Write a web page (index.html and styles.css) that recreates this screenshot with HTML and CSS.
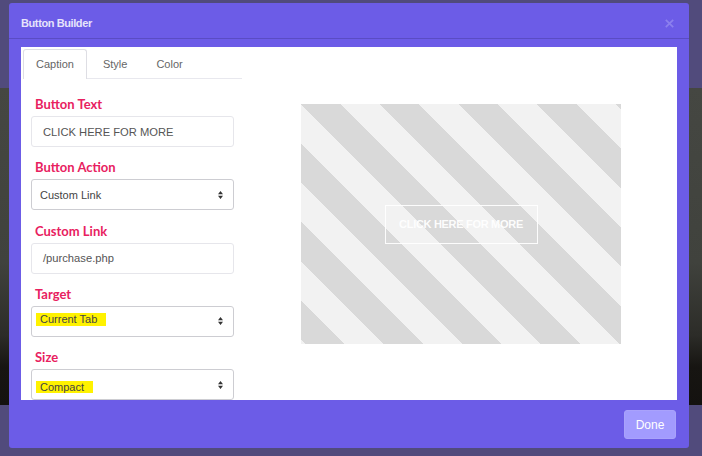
FILE: index.html
```html
<!DOCTYPE html>
<html lang="en">
<head>
<meta charset="utf-8">
<title>Button Builder</title>
<link rel="stylesheet" href="styles.css">
</head>
<body>
<div class="page">
  <div class="page-photo"></div>
</div>
<div class="modal">
  <div class="modal-header">
    <span class="modal-title">Button Builder</span>
    <svg class="modal-close" width="9" height="9" viewBox="0 0 9 9"><path d="M0.8 0.8 L8.2 8.2 M8.2 0.8 L0.8 8.2" stroke="#8c80ee" stroke-width="1.7" fill="none"/></svg>
  </div>
  <div class="modal-body">
    <div class="panel">
      <div class="editor">
        <div class="tabs">
          <div class="tab tab-active">Caption</div>
          <div class="tab">Style</div>
          <div class="tab">Color</div>
        </div>
        <div class="form">
          <div class="field">
            <div class="label">Button Text</div>
            <div class="input">CLICK HERE FOR MORE</div>
          </div>
          <div class="field">
            <div class="label">Button Action</div>
            <div class="select"><span>Custom Link</span><svg class="caret" width="5" height="8" viewBox="0 0 5 8"><path d="M0 3.2 L2.5 0 L5 3.2Z M0 4.8 L2.5 8 L5 4.8Z" fill="#333"/></svg></div>
          </div>
          <div class="field">
            <div class="label">Custom Link</div>
            <div class="input">/purchase.php</div>
          </div>
          <div class="field">
            <div class="label">Target</div>
            <div class="select"><span class="mark mark-a">Current Tab</span><svg class="caret" width="5" height="8" viewBox="0 0 5 8"><path d="M0 3.2 L2.5 0 L5 3.2Z M0 4.8 L2.5 8 L5 4.8Z" fill="#333"/></svg></div>
          </div>
          <div class="field">
            <div class="label">Size</div>
            <div class="select"><span class="mark mark-b">Compact</span><svg class="caret" width="5" height="8" viewBox="0 0 5 8"><path d="M0 3.2 L2.5 0 L5 3.2Z M0 4.8 L2.5 8 L5 4.8Z" fill="#333"/></svg></div>
          </div>
        </div>
      </div>
      <div class="preview-area">
        <div class="preview">
          <div class="preview-button">CLICK HERE FOR MORE</div>
        </div>
      </div>
    </div>
  </div>
  <div class="modal-footer">
    <div class="btn-done">Done</div>
  </div>
</div>
</body>
</html>
```
FILE: styles.css
```css
html, body {
  margin: 0;
  padding: 0;
}
body {
  width: 702px;
  height: 456px;
  overflow: hidden;
  background: #514b7c;
  font-family: "Liberation Sans", Arial, sans-serif;
}
.page {
  width: 702px;
  height: 456px;
  padding-top: 88px;
  box-sizing: border-box;
}
.page-photo {
  height: 317px;
  background: linear-gradient(to bottom, #454742 0%, #40423d 55%, #2c2c28 78%, #171512 88%, #141210 100%);
}
.modal {
  position: absolute;
  left: 9px;
  top: 3px;
  width: 680px;
  height: 445px;
  background: #6c5ce7;
  border-radius: 3px;
  display: flex;
  flex-direction: column;
}
.modal-header {
  height: 36px;
  box-sizing: border-box;
  padding: 5px 15px 0 12px;
  border-bottom: 1px solid #5a4cc4;
  display: flex;
  align-items: center;
  justify-content: space-between;
}
.modal-title {
  color: #e6e3fb;
  font-size: 11px;
  font-weight: bold;
  letter-spacing: -0.4px;
}
.modal-close {
  display: block;
}
.modal-body {
  padding: 8px 12px 0;
}
.panel {
  background: #fff;
  height: 353px;
  display: flex;
  overflow: hidden;
}
.editor {
  width: 219px;
  margin-left: 2px;
  flex: none;
}
.tabs {
  margin-top: 2px;
  display: flex;
  border-bottom: 1px solid #e8e8ee;
}
.tab {
  height: 28px;
  line-height: 28px;
  padding: 0 12px;
  border: 1px solid transparent;
  border-bottom: none;
  margin-right: 3px;
  margin-bottom: -1px;
  font-size: 11px;
  color: #666;
}
.tab-active {
  background: #fff;
  border-color: #dedee4;
  border-radius: 3px 3px 0 0;
  height: 29px;
}
.form {
  padding: 16px 8px 0;
}
.field {
  margin-bottom: 11.3px;
}
.label {
  font-family: "Lato", sans-serif;
  font-weight: bold;
  font-size: 13px;
  line-height: 16px;
  color: #e8215f;
  padding-top: 1px;
  margin: 0 0 4px 4px;
}
.input, .select {
  height: 31px;
  box-sizing: border-box;
  border-radius: 3px;
  background: #fff;
  font-size: 11px;
  display: flex;
  align-items: center;
}
.input {
  border: 1px solid #e6e6eb;
  padding-left: 11px;
  color: #555;
  font-size: 11.2px;
}
.select {
  border: 1px solid #cdcdd2;
  padding: 0 10px 0 8px;
  color: #444;
  justify-content: space-between;
}
.caret {
  display: block;
}
.mark {
  background: #fff200;
  display: inline-block;
  line-height: 13px;
  padding: 0 9px 0 4px;
  margin-left: -4px;
}
.mark-a {
  margin-top: -3px;
}
.mark-b {
  line-height: 12px;
  margin-top: 5px;
}
.preview-area {
  flex: 1;
  padding: 57px 0 0 59px;
}
.preview {
  width: 320px;
  height: 240px;
  background: repeating-linear-gradient(45deg, #f2f2f2 0 2.9px, #d9d9d9 2.9px 30.7px, #f2f2f2 30.7px 55.6px);
  display: flex;
  align-items: center;
  justify-content: center;
}
.preview-button {
  width: 153px;
  height: 39px;
  box-sizing: border-box;
  border: 1px solid rgba(255, 255, 255, 0.9);
  display: flex;
  align-items: center;
  justify-content: center;
  color: rgba(255, 255, 255, 0.95);
  font-size: 11px;
  font-weight: bold;
  letter-spacing: -0.3px;
}
.modal-footer {
  display: flex;
  justify-content: flex-end;
  padding: 10px 13px 0 0;
}
.btn-done {
  width: 52px;
  height: 29px;
  box-sizing: border-box;
  border-radius: 3px;
  background: #a29bfe;
  border: 1px solid #a9a2fb;
  color: #fff;
  font-size: 12px;
  display: flex;
  align-items: center;
  justify-content: center;
}
```
